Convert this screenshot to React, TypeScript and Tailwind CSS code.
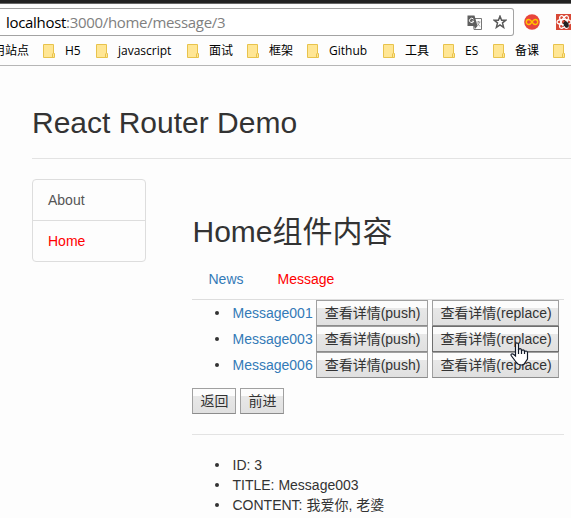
import React from "react";

const UI = "font-['Open_Sans','Noto_Sans_CJK_SC',sans-serif]";

function Folder() {
  return (
    <svg width="12" height="14" viewBox="0 0 12 14" className="shrink-0">
      <path d="M.5.5h10v9h1v4H.5z" fill="#ffe694" stroke="#e8c34c" />
      <path d="M9.5 9.5v4" stroke="#e8c34c" />
    </svg>
  );
}

function Bookmark({ label, width }: { label: string; width: string }) {
  return (
    <div className={`flex shrink-0 items-center gap-[10px] ${width}`}>
      <Folder />
      <span className="whitespace-nowrap pt-px">{label}</span>
    </div>
  );
}

function Browser() {
  return (
    <div className={`${UI} text-black`}>
      <div className="h-[4px] border-b border-[#666] bg-[#222]" />
      <div className="flex h-[32px] pt-[4px]">
        <div className="flex h-[28px] w-[514px] shrink-0 items-center rounded-r-[3px] border border-l-0 border-[#a3a3a3] bg-white pl-[6px]">
          <span className="w-[461px] text-[15px] tracking-[-0.31px] text-[#808080]">
            <span className="text-black">localhost</span>:3000/home/message/3
          </span>
          <svg width="15" height="15" viewBox="0 0 15 15" className="shrink-0">
            <path d="M6 3.5h8.500v11H7z" fill="#fff" stroke="#777" />
            <path d="M.5.5h7l3 10.500H.5z" fill="#5f5f5f" />
            <path d="M6.500 4.200a2.200 2.200 0 1 0 .3 2H4.800" fill="none" stroke="#fff" />
            <path d="M9.500 7h4M11.500 6v1M12.500 7q-.5 3-3 4M10.500 8.500l2.500 3" fill="none" stroke="#888" strokeWidth=".8" />
            <path d="M7 11h3.500L8 14z" fill="#5f5f5f" />
          </svg>
          <svg width="14" height="14" viewBox="0 0 14 14" className="ml-[11px] shrink-0">
            <path d="M7 1.200l1.600 4h4.200L9.500 7.900l1.100 4.500L7 9.900l-3.600 2.500 1.100-4.500L1.200 5.200h4.200z" fill="none" stroke="#5a5a5a" strokeWidth="1.500" />
          </svg>
        </div>
        <svg width="16" height="16" viewBox="0 0 16 16" className="ml-[10px] mt-[6px] shrink-0">
          <circle cx="8" cy="8" r="7.800" fill="#e8453c" />
          <path d="M8 8C6.500 5.800 5.800 5.500 4.800 5.500a2.500 2.500 0 0 0 0 5C5.800 10.500 6.500 10.200 8 8s2.200-2.500 3.200-2.500a2.500 2.500 0 0 1 0 5C10.200 10.500 9.500 10.200 8 8z" fill="none" stroke="#ffc400" strokeWidth="1.400" />
        </svg>
        <svg width="16" height="16" viewBox="0 0 16 16" className="ml-[16px] mt-[6px] shrink-0">
          <path d="M0 0h16v16H0z" fill="#d84836" />
          <g fill="none" stroke="#fff" strokeWidth="1.200">
            <ellipse cx="8" cy="8" rx="7" ry="2.700" />
            <ellipse cx="8" cy="8" rx="7" ry="2.700" transform="rotate(60 8 8)" />
            <ellipse cx="8" cy="8" rx="7" ry="2.700" transform="rotate(120 8 8)" />
          </g>
          <ellipse cx="10" cy="10.500" rx="2.300" ry="3.300" fill="#222" transform="rotate(-25 10 10)" />
          <path d="M6.500 9l6 4M7 12.500l6-4M8 6l1.500 2" stroke="#222" strokeWidth=".8" />
        </svg>
      </div>
      <div className="flex h-[30px] items-center overflow-hidden border-b border-[#b6b6b6] text-[12px]">
        <div className="flex w-[43px] shrink-0 justify-end pr-[14px]">
          <span className="whitespace-nowrap pt-px">用站点</span>
        </div>
        <Bookmark label="H5" width="w-[53px]" />
        <Bookmark label="javascript" width="w-[91px]" />
        <Bookmark label="面试" width="w-[60px]" />
        <Bookmark label="框架" width="w-[60px]" />
        <Bookmark label="Github" width="w-[76px]" />
        <Bookmark label="工具" width="w-[60px]" />
        <Bookmark label="ES" width="w-[50px]" />
        <Bookmark label="备课" width="w-[60px]" />
        <Folder />
      </div>
    </div>
  );
}

function Button({ children, width, hover }: { children: React.ReactNode; width: string; hover?: boolean }) {
  return (
    <button
      className={`h-[26px] shrink-0 whitespace-nowrap border bg-[linear-gradient(#fcfcfc_0_7px,#e8e8e8_7px,#e0e0e0)] pl-px text-center leading-[24px] ${width} ${
        hover ? "border-[#6e6e6e]" : "border-[#a0a0a0] border-b-[#8c8c8c]"
      }`}
    >
      {children}
    </button>
  );
}

function Hand() {
  return (
    <svg width="19" height="24" viewBox="0 0 19 24" className="absolute left-[78px] top-[16px] z-10">
      <path
        d="M5.500 14V2.500Q5.500 1 7 1t1.500 1.500V8q.3-1.300 1.500-1.300T11.500 8v1q.3-1.200 1.500-1.200T14.500 9v1q.3-1 1.500-1t1.500 1.500V17L15.500 20Q14.500 23 11.500 23Q8 23 6 20l-4.500-6q-1-1.500 0-2t2 .2z"
        fill="#fff"
        stroke="#111827"
        strokeWidth="1.200"
      />
      <path d="M8.500 7v5M11.500 8v4M14.500 9v3" stroke="#111827" strokeWidth="1.200" />
    </svg>
  );
}

function Message({ id, hover }: { id: string; hover?: boolean }) {
  return (
    <li className="flex h-[26px] items-center">
      <span className="ml-[23px] mr-[13px] size-[4px] shrink-0 rounded-full bg-[#333]" />
      <a className="w-[84px] shrink-0 pl-[0.5px] text-[#337ab7]">{id}</a>
      <Button width="w-[112px]">查看详情(push)</Button>
      <div className="relative ml-[4px]">
        <Button width="w-[127px]" hover={hover}>查看详情(replace)</Button>
        {hover && <Hand />}
      </div>
    </li>
  );
}

function Detail({ children }: { children: React.ReactNode }) {
  return (
    <li className="flex h-[20px] items-center">
      <span className="ml-[23px] mr-[13px] size-[4px] shrink-0 rounded-full bg-[#333]" />
      <span className="pl-[0.5px]">{children}</span>
    </li>
  );
}

export default function App() {
  return (
    <div className="h-[518px] w-[571px] overflow-hidden bg-[#fdfdfd]">
      <Browser />
      <div className="pl-[32px] font-['Liberation_Sans','Noto_Sans_CJK_SC',sans-serif] text-[14px] leading-[20px] text-[#333]">
        <div className="h-[93px] border-b border-[#e3e3e3] pt-[40px]">
          <h2 className="text-[30px] leading-[33px]">React Router Demo</h2>
        </div>
        <div className="flex pt-[20px]">
          <div className="h-[83px] w-[114px] shrink-0 rounded-[4px] border border-[#ddd]">
            <div className="h-[41px] border-b border-[#ddd] px-[15px] py-[10px] text-[#555]">About</div>
            <div className="px-[15px] py-[10px] text-[#f00]">Home</div>
          </div>
          <div className="ml-[46px] w-[372px] pt-[36px]">
            <h2 className="pl-[0.5px] text-[30px] leading-[33px]">Home组件内容</h2>
            <nav className="mt-[10px] flex h-[42px] border-b border-[#ddd] pl-[16.5px] pt-[11px]">
              <a className="w-[69px] text-[#337ab7]">News</a>
              <a className="text-[#f00]">Message</a>
            </nav>
            <ul>
              <Message id="Message001" />
              <Message id="Message003" hover />
              <Message id="Message006" />
            </ul>
            <div className="mt-[10px] flex gap-[4px]">
              <Button width="w-[44px]">返回</Button>
              <Button width="w-[44px]">前进</Button>
            </div>
            <div className="mt-[20px] border-t border-[#e3e3e3] pt-[20px]">
              <ul>
                <Detail>ID: 3</Detail>
                <Detail>TITLE: Message003</Detail>
                <Detail>CONTENT: 我爱你, 老婆</Detail>
              </ul>
            </div>
          </div>
        </div>
      </div>
    </div>
  );
}
